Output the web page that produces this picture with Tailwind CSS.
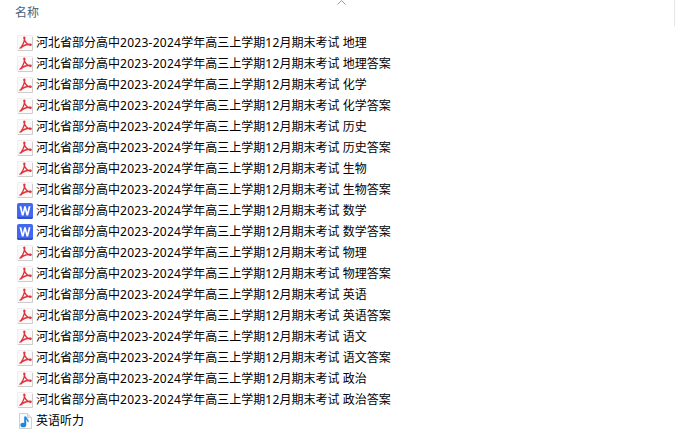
<!DOCTYPE html>
<html lang="en">
<head>
<meta charset="UTF-8">
<title>files</title>
<script src="https://cdn.jsdelivr.net/npm/@tailwindcss/browser@4"></script>
</head>
<body class="bg-white">
<svg width="0" height="0" class="absolute">
  <symbol id="pdf" viewBox="0 0 16 16">
    <path d="M.5 .5H15.500V15.500H.5Z" fill="#fbf9f9" stroke="#f0eeee"/>
    <path d="M1 15.500H15.500V2" fill="none" stroke="#cfcccc"/>
    <path d="M2.500 13.500C5 12 7.400 7 7.800 3C7.900 1.800 6.700 1.800 6.900 3C7.200 6 10.500 10.300 13.500 10.200C14.500 10.100 14.300 9.200 13.300 9.200C10 9.200 6 10.500 3.800 13" fill="none" stroke="#e0343c" stroke-width="1.400"/>
  </symbol>
  <symbol id="word" viewBox="0 0 16 16">
    <rect width="16" height="16" rx="2" fill="#4268f0"/>
    <path d="M0 14H16A2 2 0 0 1 14 16H2A2 2 0 0 1 0 14Z" fill="#2f4fd0"/>
    <path d="M2.500 3.200L4.800 12.500H6.600L8 6.800L9.400 12.500H11.200L13.500 3.200H11.700L10.300 9.200L8.800 3.200H7.200L5.700 9.200L4.300 3.200Z" fill="#fff"/>
  </symbol>
  <symbol id="audio" viewBox="0 0 16 16">
    <path d="M2.500 .5H10.500L14.500 4.500V15.500H2.500Z" fill="#fbfbfb" stroke="#cfcfcf"/>
    <path d="M10.500 .5V4.500H14.500" fill="#e8e8e8" stroke="#cfcfcf"/>
    <path d="M8.200 3.500V12" stroke="#1d86e0" stroke-width="2"/>
    <path d="M8.500 4C9 6.500 11.500 6.500 11 9" fill="none" stroke="#1d86e0" stroke-width="1.400"/>
    <ellipse cx="6.300" cy="12" rx="2.900" ry="2.300" fill="#1d86e0"/>
  </symbol>
</svg>
<div class="relative h-[434px] w-[679px] overflow-hidden font-['Noto_Sans','Noto_Sans_CJK_SC',sans-serif] text-[12px] text-black">
  <svg class="absolute left-[337px] top-0" width="9" height="5" viewBox="0 0 9 5"><path d="M.5 4.500L4.500 .5L8.500 4.500" fill="none" stroke="#9a9a9a"/></svg>
  <div class="absolute left-[674px] top-0 h-[26px] w-px bg-[#e5e5e5]"></div>
  <div class="h-[32px] pl-[15px] pt-[4px] leading-[18px] text-[#4c607a]">名称</div>
  <ul class="pl-[17px]">
    <li class="flex h-[21px] items-center gap-[3px]"><svg width="16" height="16"><use href="#pdf"/></svg><span>河北省部分高中<span class="tracking-[0.27px]">2023-2024</span>学年高三上学期<span class="tracking-[0.27px]">12</span>月期末考试 地理</span></li>
    <li class="flex h-[21px] items-center gap-[3px]"><svg width="16" height="16"><use href="#pdf"/></svg><span>河北省部分高中<span class="tracking-[0.27px]">2023-2024</span>学年高三上学期<span class="tracking-[0.27px]">12</span>月期末考试 地理答案</span></li>
    <li class="flex h-[21px] items-center gap-[3px]"><svg width="16" height="16"><use href="#pdf"/></svg><span>河北省部分高中<span class="tracking-[0.27px]">2023-2024</span>学年高三上学期<span class="tracking-[0.27px]">12</span>月期末考试 化学</span></li>
    <li class="flex h-[21px] items-center gap-[3px]"><svg width="16" height="16"><use href="#pdf"/></svg><span>河北省部分高中<span class="tracking-[0.27px]">2023-2024</span>学年高三上学期<span class="tracking-[0.27px]">12</span>月期末考试 化学答案</span></li>
    <li class="flex h-[21px] items-center gap-[3px]"><svg width="16" height="16"><use href="#pdf"/></svg><span>河北省部分高中<span class="tracking-[0.27px]">2023-2024</span>学年高三上学期<span class="tracking-[0.27px]">12</span>月期末考试 历史</span></li>
    <li class="flex h-[21px] items-center gap-[3px]"><svg width="16" height="16"><use href="#pdf"/></svg><span>河北省部分高中<span class="tracking-[0.27px]">2023-2024</span>学年高三上学期<span class="tracking-[0.27px]">12</span>月期末考试 历史答案</span></li>
    <li class="flex h-[21px] items-center gap-[3px]"><svg width="16" height="16"><use href="#pdf"/></svg><span>河北省部分高中<span class="tracking-[0.27px]">2023-2024</span>学年高三上学期<span class="tracking-[0.27px]">12</span>月期末考试 生物</span></li>
    <li class="flex h-[21px] items-center gap-[3px]"><svg width="16" height="16"><use href="#pdf"/></svg><span>河北省部分高中<span class="tracking-[0.27px]">2023-2024</span>学年高三上学期<span class="tracking-[0.27px]">12</span>月期末考试 生物答案</span></li>
    <li class="flex h-[21px] items-center gap-[3px]"><svg width="16" height="16"><use href="#word"/></svg><span>河北省部分高中<span class="tracking-[0.27px]">2023-2024</span>学年高三上学期<span class="tracking-[0.27px]">12</span>月期末考试 数学</span></li>
    <li class="flex h-[21px] items-center gap-[3px]"><svg width="16" height="16"><use href="#word"/></svg><span>河北省部分高中<span class="tracking-[0.27px]">2023-2024</span>学年高三上学期<span class="tracking-[0.27px]">12</span>月期末考试 数学答案</span></li>
    <li class="flex h-[21px] items-center gap-[3px]"><svg width="16" height="16"><use href="#pdf"/></svg><span>河北省部分高中<span class="tracking-[0.27px]">2023-2024</span>学年高三上学期<span class="tracking-[0.27px]">12</span>月期末考试 物理</span></li>
    <li class="flex h-[21px] items-center gap-[3px]"><svg width="16" height="16"><use href="#pdf"/></svg><span>河北省部分高中<span class="tracking-[0.27px]">2023-2024</span>学年高三上学期<span class="tracking-[0.27px]">12</span>月期末考试 物理答案</span></li>
    <li class="flex h-[21px] items-center gap-[3px]"><svg width="16" height="16"><use href="#pdf"/></svg><span>河北省部分高中<span class="tracking-[0.27px]">2023-2024</span>学年高三上学期<span class="tracking-[0.27px]">12</span>月期末考试 英语</span></li>
    <li class="flex h-[21px] items-center gap-[3px]"><svg width="16" height="16"><use href="#pdf"/></svg><span>河北省部分高中<span class="tracking-[0.27px]">2023-2024</span>学年高三上学期<span class="tracking-[0.27px]">12</span>月期末考试 英语答案</span></li>
    <li class="flex h-[21px] items-center gap-[3px]"><svg width="16" height="16"><use href="#pdf"/></svg><span>河北省部分高中<span class="tracking-[0.27px]">2023-2024</span>学年高三上学期<span class="tracking-[0.27px]">12</span>月期末考试 语文</span></li>
    <li class="flex h-[21px] items-center gap-[3px]"><svg width="16" height="16"><use href="#pdf"/></svg><span>河北省部分高中<span class="tracking-[0.27px]">2023-2024</span>学年高三上学期<span class="tracking-[0.27px]">12</span>月期末考试 语文答案</span></li>
    <li class="flex h-[21px] items-center gap-[3px]"><svg width="16" height="16"><use href="#pdf"/></svg><span>河北省部分高中<span class="tracking-[0.27px]">2023-2024</span>学年高三上学期<span class="tracking-[0.27px]">12</span>月期末考试 政治</span></li>
    <li class="flex h-[21px] items-center gap-[3px]"><svg width="16" height="16"><use href="#pdf"/></svg><span>河北省部分高中<span class="tracking-[0.27px]">2023-2024</span>学年高三上学期<span class="tracking-[0.27px]">12</span>月期末考试 政治答案</span></li>
    <li class="flex h-[21px] items-center gap-[3px]"><svg width="16" height="16"><use href="#audio"/></svg><span>英语听力</span></li>
  </ul>
</div>
</body>
</html>
